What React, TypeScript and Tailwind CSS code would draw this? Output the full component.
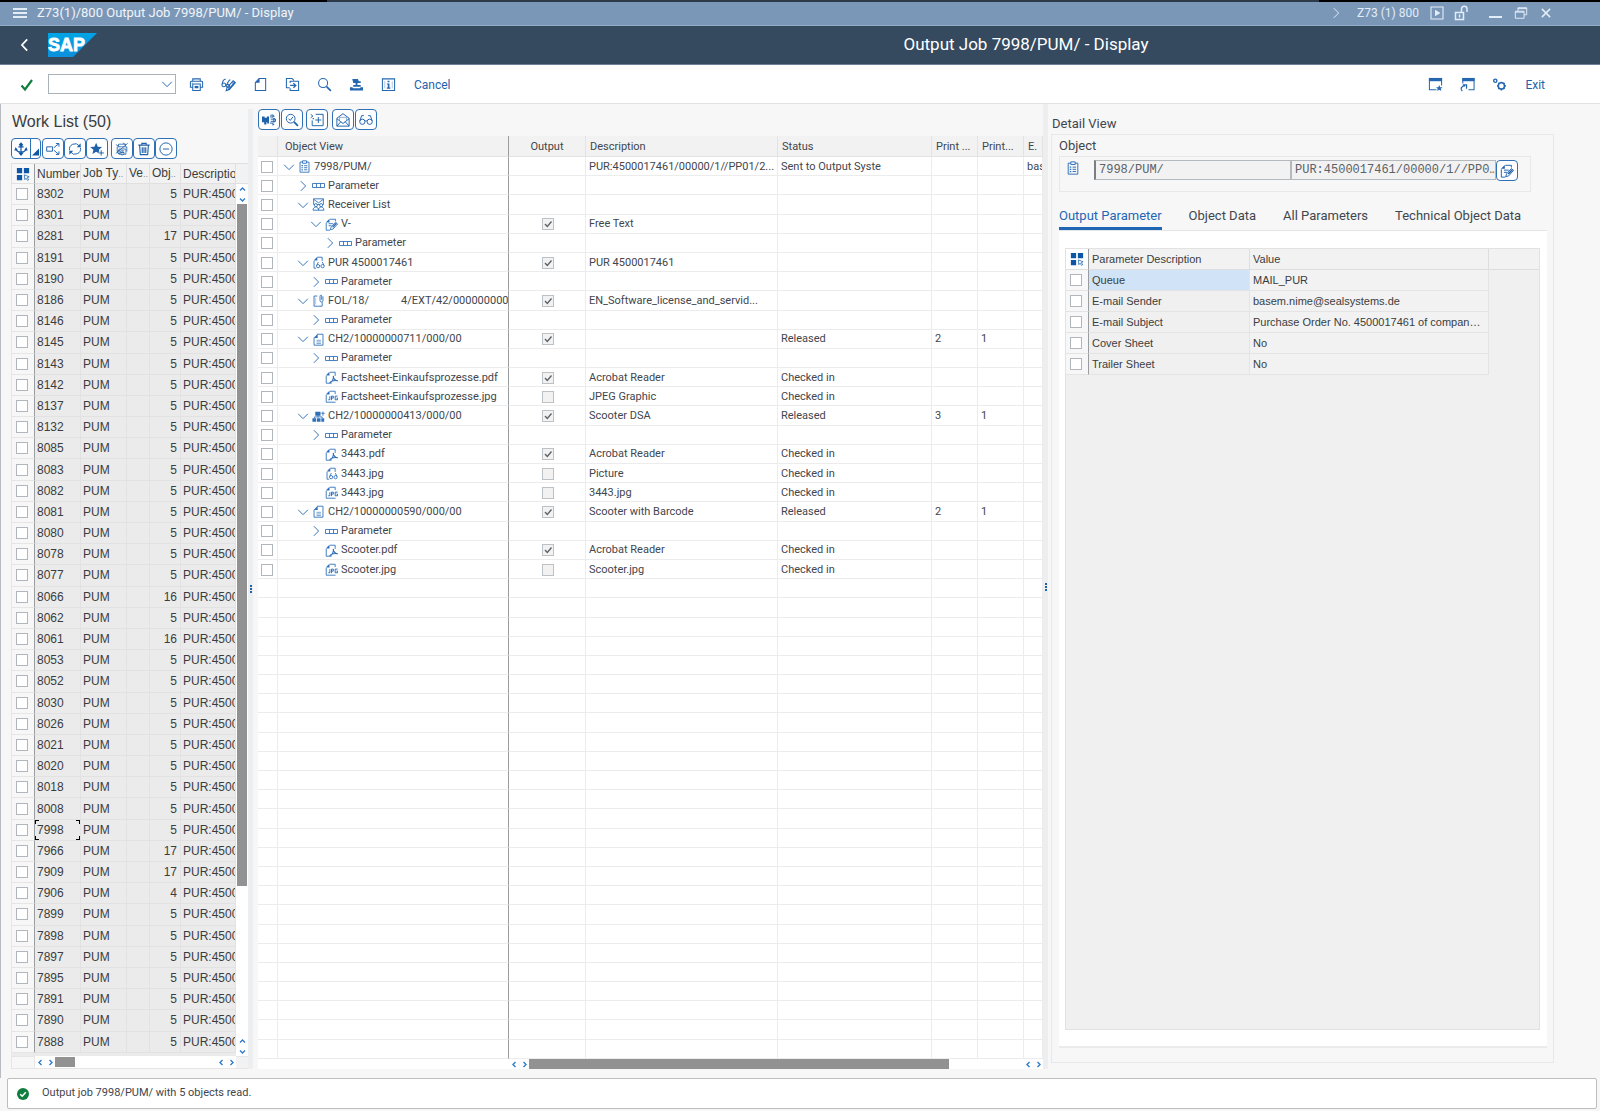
import type { ReactNode } from "react";

const ui = "font-[Roboto,'Liberation_Sans',sans-serif]";
const arial = "font-['Liberation_Sans',Arial,sans-serif]";

/* ---------- icons ---------- */

function Svg({ children, size = "size-4", stroke = 1.1 }: { children: ReactNode; size?: string; stroke?: number }) {
  return (
    <svg viewBox="0 0 16 16" className={`${size} shrink-0`} fill="none" stroke="currentColor" strokeWidth={stroke} aria-hidden="true">
      {children}
    </svg>
  );
}

const solid = { fill: "currentColor", stroke: "none" };

const ChevronRight = () => (
  <Svg size="size-3.5"><path d="M5.500 2.500L11 8l-5.500 5.500" /></Svg>
);
const ChevronDown = () => (
  <Svg size="size-3.5"><path d="M2.500 5.500L8 11l5.500-5.500" /></Svg>
);

const PrintIcon = () => (
  <Svg>
    <path d="M4 4.500V2h8v2.500M4 11H1.500V5.500a1 1 0 0 1 1-1h11a1 1 0 0 1 1 1V11H12M4 7.500h8V14.500H4z" />
    <path d="M6 9.500h4V12H6z" {...solid} />
    <path d="M3 6.500h.8" />
  </Svg>
);
const GlassesPencilIcon = () => (
  <Svg>
    <circle cx="3" cy="8.500" r="2" /><circle cx="7.500" cy="9.500" r="1.700" />
    <path d="M1.200 8C1.500 5 2.500 2.500 5 2.500M6.200 8.500C7 6 8 3.500 10 3" />
    <path d="M5.500 14.500l1-3.200L13 4l2.300 2L9 13.300zM7 14l8-8.500" />
    <path d="M12.800 4l2.500 2-2 2.500-2.500-2.200z" {...solid} fillOpacity=".55" />
  </Svg>
);
const PageIcon = () => (
  <Svg>
    <path d="M6.500 1.500h7v13h-11V6z" />
    <path d="M2 6l5-5v5z" {...solid} />
  </Svg>
);
const PageArrowIcon = () => (
  <Svg>
    <path d="M5 11.500H1.500v-10h6l2 2M9.500 4.500h5v10h-9v-2.500M5.500 6.500v-2h4" />
    <path d="M5.500 9h6M9 6.500L11.500 9 9 11.500" strokeWidth="1.400" />
  </Svg>
);
const SearchIcon = () => (
  <Svg>
    <circle cx="6.500" cy="6.500" r="4.800" />
    <path d="M10.200 10.200l4.600 4.600" strokeWidth="1.800" />
  </Svg>
);
const StampIcon = () => (
  <Svg>
    <path d="M3.500 2h6l1 2.500h2V6.500H9v2h3.500v2h-8v-2H7V6.500H4.500z" {...solid} />
    <path d="M1 11h2.500l1 1h7l1-1H15v3.500H1z" {...solid} />
  </Svg>
);
const InfoIcon = () => (
  <Svg>
    <path d="M1.500 2h13v12.500h-13z" />
    <path d="M7 4h2v1.700H7zM6.300 7H9v4.300h1V12.400H6.200v-1.100h1V8.100h-.9z" {...solid} />
    <path d="M4 4.500v7.500M12 4.500v7.500" strokeOpacity=".35" />
  </Svg>
);
const WindowStarIcon = () => (
  <Svg>
    <path d="M9 13.500H1.500v-12h13V9" />
    <path d="M1 1h14v3.500H1z" {...solid} />
    <path d="M12 8.500l1 2.300 2.500.2-1.900 1.600.6 2.400-2.200-1.300L9.800 15l.6-2.400L8.500 11l2.500-.2z" {...solid} />
  </Svg>
);
const WindowArrowIcon = () => (
  <Svg>
    <path d="M3 7V1.500h12v12H9" />
    <path d="M2.500 1H15.500v3.500h-13z" {...solid} />
    <path d="M2.500 15C0 12.500 1.500 9.500 5.500 9.500M3 8.500h4v4" strokeWidth="1.300" />
  </Svg>
);
const GearsIcon = () => (
  <Svg>
    <circle cx="3.500" cy="4" r="1.700" strokeWidth="1.500" />
    <circle cx="10" cy="9.500" r="3.300" strokeWidth="1.600" />
    <path d="M10 5v1.200M10 12.800V14.500M5.500 9.500H7M13.200 9.500h1.600M6.800 6.300l1 1M12.300 11.800l1 1M13.300 6.300l-1 1M6.800 12.700l1-1" strokeWidth="1.700" />
  </Svg>
);
const AnchorIcon = () => (
  <Svg>
    <path d="M8 3v10M2.500 8.500C3 11 5 11.500 8 11.500s5-.5 5.500-3M5 5.500h6" strokeWidth="1.300" />
    <path d="M8 .3l2.600 2.700L8 5.700 5.400 3zM8 16l-3.200-4h6.400zM2 5.800l2.500 4H.3zM14 5.800l1.700 4h-4.200z" {...solid} />
  </Svg>
);
const BranchIcon = () => (
  <Svg>
    <path d="M.8 5.500h6.700v5H.8zM9 6.500l5.500-4.500M9 9.500l5.500 4.500M11.300 1.800h3.500v3.500M11.300 14.200h3.500v-3.500" />
  </Svg>
);
const RefreshIcon = () => (
  <Svg>
    <path d="M1.800 9.500A6.300 6.300 0 0 1 13 4.500M14.200 6.500A6.300 6.300 0 0 1 3 11.500" />
    <path d="M14.500 1.500v4.500H10zM1.500 14.500V10H6z" {...solid} />
  </Svg>
);
const StarPlusIcon = () => (
  <Svg>
    <path d="M7 .8l1.900 4.500 4.900.4-3.700 3.200 1.100 4.700L7 11.200 2.800 13.700l1.100-4.800L.2 5.700l4.900-.4z" {...solid} />
    <path d="M12.800 9.500v6M9.800 12.500h6" stroke="#fff" strokeWidth="3" />
    <path d="M12.800 9.500v6M9.800 12.500h6" />
  </Svg>
);
const PrintOffIcon = () => (
  <Svg stroke={0.9}>
    <path d="M4 5V2.500h8V5M2.500 11V5.500h11V11M4.500 8h8v6h-8zM1 13L14.500 1.500M1 3l4 2M9 1l3 2M6.500 10h4M6.500 12h4" />
    <circle cx="4.500" cy="11.500" r="1.800" /><circle cx="8.500" cy="13" r="1.800" />
  </Svg>
);
const TrashIcon = () => (
  <Svg>
    <path d="M1.500 3.500h13M5.500 3.500v-2h5v2M3 4l.8 10.500h8.400L13 4M6 6v6.500M8 6v6.500M10 6v6.500" strokeWidth="1.300" />
  </Svg>
);
const MinusCircleIcon = () => (
  <Svg>
    <circle cx="8" cy="8" r="7" />
    <path d="M4.500 8h7" />
  </Svg>
);
const TransportIcon = () => (
  <Svg>
    <path d="M0 4h3v1.500h2.500V4H8v8H6V10.500H5V13H2.500v-2.500H0z" {...solid} />
    <path d="M9 4.500h3.500V2L14 3.500 12.500 5M9 11.500h3.500V14l1.500-1.500M10 7h5.500M10 9.500h5.500M13.500 5.500v5.500M14 6l1.800 2L14 10.500M9.500 2.500H12" />
  </Svg>
);
const SearchCheckIcon = () => (
  <Svg>
    <circle cx="6.500" cy="6.500" r="5" />
    <path d="M4 6.500L6 8.500l3-4" />
    <path d="M10.200 10.200l4.600 4.600" strokeWidth="2" />
  </Svg>
);
const InsertIcon = () => (
  <Svg>
    <path d="M6.500 1.500h8.500v13H2.500V8.500M9.500 4.500v7M6 8h7M.8 1.500l2.500 2-2.500 2" />
    <path d="M3 6.500h1.500" strokeWidth="1.300" />
  </Svg>
);
const MailIcon = () => (
  <Svg>
    <path d="M1 6L8 .8 15 6v9H1zM1 6.500l4.500 3.500L8 12l2.500-2L15 6.500M1 15l4.500-5M15 15l-4.500-5" />
    <path d="M4 8.500V5h8v3.500" strokeOpacity=".5" />
  </Svg>
);
const GlassesIcon = () => (
  <Svg>
    <circle cx="3.800" cy="10" r="3" /><circle cx="12.200" cy="10" r="3" />
    <path d="M6.800 9.500c.5-.8 1.900-.8 2.400 0M1 9L3 3h2.500M15 9l-2-6h-2.500" />
  </Svg>
);
const ClipboardIcon = () => (
  <Svg>
    <path d="M5.500 2.500h-3v12.500h11V2.500h-3M5.500 1h5v3h-5zM7.500 7h4M7.500 9.500h4M7.500 12h4" />
    <path d="M4.300 6.300h1.700v1.500H4.300zM4.300 8.800h1.700v1.500H4.300zM4.300 11.300h1.700v1.500H4.300z" {...solid} />
  </Svg>
);
const ParameterIcon = () => (
  <Svg>
    <path d="M.6 5.500h14.800v5H.6zM5.500 5.500v5M10.500 5.500v5" />
  </Svg>
);
const ReceiverIcon = () => (
  <Svg>
    <path d="M2 1h12v7H2zM2 1.500L8 6l6-4.500" />
    <circle cx="4.800" cy="8.800" r="1.900" fill="#fff" /><circle cx="11.200" cy="8.800" r="1.900" fill="#fff" />
    <path d="M1.300 15c0-5.200 6.700-5.200 6.700 0c0-5.200 6.700-5.200 6.700 0z" fill="#fff" />
  </Svg>
);
const EditDocIcon = () => (
  <Svg>
    <path d="M6 1.500h7V4M1.500 6v9h4.500M4.500 7h5.500M4.500 9.500h3.500" />
    <path d="M1 5.500L5.500 1v4.500z" {...solid} />
    <path d="M6.500 14.500l1-3.200L13 5.200l2.500 2.100L10 13.500z" />
    <path d="M9.500 11.500l4.500-5" strokeWidth="1.800" />
  </Svg>
);
const ViewDocIcon = () => (
  <Svg>
    <path d="M6.500 1.500h6V6M2.500 6v9H5" />
    <path d="M2 5.500L6.500 1v4.500z" {...solid} />
    <circle cx="7.500" cy="12.500" r="2" /><circle cx="13" cy="12.500" r="2" />
    <path d="M5.800 11.500l2-4M14.700 11.500l-2-4" />
  </Svg>
);
const FolderClipIcon = () => (
  <Svg>
    <path d="M6.500 2.500h-4v12.500h10V10" />
    <path d="M13.500 3v5a1.800 1.800 0 0 1-3.600 0V2.500a1 1 0 0 1 2 0V7" />
    <path d="M4.500 4.500v8.500" strokeOpacity=".4" />
  </Svg>
);
const DocIcon = () => (
  <Svg>
    <path d="M6.500 1.500h7v13.500h-11V6" />
    <path d="M5.500 9h5.500M5.500 11h5.500M5.500 13h5.500" strokeOpacity=".7" />
    <path d="M2 6l5-5v5z" {...solid} />
  </Svg>
);
const StructureIcon = () => (
  <Svg>
    <path d="M4 2h6.500v5H4zM.5 10h4.500v4.500H.500zM6 10h4.500v4.500H6zM11.500 10h3.500v4.500h-3.500z" {...solid} />
    <path d="M7.500 6v3M3 10V8.500h9.500V10M13.500 2v5M11.500 4h4" />
  </Svg>
);
const PdfIcon = () => (
  <Svg>
    <path d="M6 1.500h6.500V6M1.500 6v9H8" />
    <path d="M1 5.500L5.500 1v4.500z" {...solid} />
    <path d="M10 6c.5 3 2.500 6 6 6M5.500 14.500c3-1 5-4.500 5-8.500M6 14c2-1.800 5.500-3 9.500-2" strokeWidth="1.300" />
  </Svg>
);
const JpgIcon = () => (
  <Svg>
    <path d="M6 1.500h6.500V5M1.500 6v9H13" />
    <path d="M1 5.500L5.500 1v4.500z" {...solid} />
    <path d="M6 7.500v4.500H4M8 12.500v-5h2.200v2.500H8M15.500 7.500h-3v4.500h3V9.900h-1.300" strokeWidth="1.200" />
  </Svg>
);

function SapLogo() {
  return (
    <svg viewBox="0 0 49 24" className="h-6 w-[49px]" role="img" aria-label="SAP">
      <defs>
        <linearGradient id="sap" x1="0" y1="0" x2="0" y2="1">
          <stop offset="0" stopColor="#00a5e6" />
          <stop offset="1" stopColor="#0c8fdc" />
        </linearGradient>
      </defs>
      <path d="M0 0h49L25 24H0z" fill="url(#sap)" />
      <text x="0" y="18" fontFamily="'Liberation Sans'" fontWeight="700" fontSize="18" fill="#fff" stroke="#fff" strokeWidth=".8">SAP</text>
    </svg>
  );
}

/* ---------- small controls ---------- */

function IconButton({ label, children }: { label: string; children: ReactNode }) {
  return (
    <button type="button" aria-label={label} className="grid size-4 place-items-center text-[#2467b0] [&>svg]:size-[15px]">
      {children}
    </button>
  );
}

function BoxButton({ label, children }: { label: string; children: ReactNode }) {
  return (
    <button type="button" aria-label={label} className="grid h-[21px] w-[22px] place-items-center rounded-[4px] border border-[#2f71b5] bg-white text-[#1f62ac] [&>svg]:size-[14px]">
      {children}
    </button>
  );
}

function Check({ label, checked = false, muted = false }: { label: string; checked?: boolean; muted?: boolean }) {
  return (
    <span className="relative block size-3">
      <input
        type="checkbox"
        aria-label={label}
        defaultChecked={checked}
        className={`block size-3 appearance-none border ${muted ? "border-[#bcc1c6] bg-[#f2f2f2]" : "border-[#b0b6bc] bg-white"}`}
      />
      {checked && (
        <svg viewBox="0 0 12 12" className="pointer-events-none absolute inset-0 size-3" fill="none" stroke="#5a5f64" strokeWidth="1.300" aria-hidden="true">
          <path d="M3 6l2.300 2.500L9.500 3.500" />
        </svg>
      )}
    </span>
  );
}

function Arrow({ dir }: { dir: "left" | "right" | "up" | "down" }) {
  const d = { left: "M5.500 2L3 4.500 5.500 7", right: "M3.500 2L6 4.500 3.500 7", up: "M2 5.500L4.500 3 7 5.500", down: "M2 3.500L4.500 6 7 3.500" }[dir];
  return (
    <button type="button" aria-label={`Scroll ${dir}`} className="grid size-[10px] place-items-center text-[#2f7ccc]">
      <svg viewBox="0 0 9 9" className="size-[9px]" fill="none" stroke="currentColor" strokeWidth="1.400"><path d={d} /></svg>
    </button>
  );
}

function SelectAll() {
  return (
    <svg viewBox="0 0 16 16" className="size-[14px] text-[#0d56a6]" fill="currentColor" aria-hidden="true">
      <path d="M1 1h6v6H1zM9 1h6v6H9zM1 9h6v6H1z" />
      <path d="M9.500 9l5.500 2.200-2.200.8 1.700 2.500-1.300.8-1.700-2.500-1.400 1.700z" fill="#fff" stroke="currentColor" strokeWidth=".8" />
    </svg>
  );
}

function Splitter({ extra }: { extra: string }) {
  return (
    <div role="separator" aria-orientation="vertical" className={`flex w-[5px] shrink-0 flex-col items-center justify-center gap-px bg-[#edeeef] ${extra}`}>
      <i className="size-[2px] bg-[#1f62ac]" />
      <i className="size-[2px] bg-[#1f62ac]" />
      <i className="size-[2px] bg-[#1f62ac]" />
    </div>
  );
}

function Dots() {
  return <span className="text-[9px] text-[#8a8d90]">..</span>;
}

/* ---------- data ---------- */

const jobs: [number, number][] = [
  [8302, 5], [8301, 5], [8281, 17], [8191, 5], [8190, 5], [8186, 5], [8146, 5], [8145, 5], [8143, 5], [8142, 5],
  [8137, 5], [8132, 5], [8085, 5], [8083, 5], [8082, 5], [8081, 5], [8080, 5], [8078, 5], [8077, 5], [8066, 16],
  [8062, 5], [8061, 16], [8053, 5], [8052, 5], [8030, 5], [8026, 5], [8021, 5], [8020, 5], [8018, 5], [8008, 5],
  [7998, 5], [7966, 17], [7909, 17], [7906, 4], [7899, 5], [7898, 5], [7897, 5], [7895, 5], [7891, 5], [7890, 5],
  [7888, 5],
];

type Node = {
  level: number;
  open?: boolean;
  icon: ReactNode;
  name: ReactNode;
  output?: boolean;
  desc?: string;
  status?: string;
  p1?: string;
  p2?: string;
  e?: string;
};

const param = (level: number): Node => ({ level, open: false, icon: <ParameterIcon />, name: "Parameter" });

const tree: Node[] = [
  { level: 0, open: true, icon: <ClipboardIcon />, name: "7998/PUM/", desc: "PUR:4500017461/00000/1//PP01/2...", status: "Sent to Output Syste", e: "bas" },
  param(1),
  { level: 1, open: true, icon: <ReceiverIcon />, name: "Receiver List" },
  { level: 2, open: true, icon: <EditDocIcon />, name: "V-", output: true, desc: "Free Text" },
  param(3),
  { level: 1, open: true, icon: <ViewDocIcon />, name: "PUR 4500017461", output: true, desc: "PUR 4500017461" },
  param(2),
  { level: 1, open: true, icon: <FolderClipIcon />, name: <>FOL/18/<span className="ml-8">4/EXT/42/0000000000</span></>, output: true, desc: "EN_Software_license_and_servid..." },
  param(2),
  { level: 1, open: true, icon: <DocIcon />, name: "CH2/10000000711/000/00", output: true, status: "Released", p1: "2", p2: "1" },
  param(2),
  { level: 2, icon: <PdfIcon />, name: "Factsheet-Einkaufsprozesse.pdf", output: true, desc: "Acrobat Reader", status: "Checked in" },
  { level: 2, icon: <JpgIcon />, name: "Factsheet-Einkaufsprozesse.jpg", output: false, desc: "JPEG Graphic", status: "Checked in" },
  { level: 1, open: true, icon: <StructureIcon />, name: "CH2/10000000413/000/00", output: true, desc: "Scooter DSA", status: "Released", p1: "3", p2: "1" },
  param(2),
  { level: 2, icon: <PdfIcon />, name: "3443.pdf", output: true, desc: "Acrobat Reader", status: "Checked in" },
  { level: 2, icon: <ViewDocIcon />, name: "3443.jpg", output: false, desc: "Picture", status: "Checked in" },
  { level: 2, icon: <JpgIcon />, name: "3443.jpg", output: false, desc: "3443.jpg", status: "Checked in" },
  { level: 1, open: true, icon: <DocIcon />, name: "CH2/10000000590/000/00", output: true, desc: "Scooter with Barcode", status: "Released", p1: "2", p2: "1" },
  param(2),
  { level: 2, icon: <PdfIcon />, name: "Scooter.pdf", output: true, desc: "Acrobat Reader", status: "Checked in" },
  { level: 2, icon: <JpgIcon />, name: "Scooter.jpg", output: false, desc: "Scooter.jpg", status: "Checked in" },
];

const emptyRows = Array.from({ length: 25 }, (_, i) => i);
const indents = ["pl-1", "pl-[18px]", "pl-[31px]", "pl-[45px]"];

const details = [
  ["Queue", "MAIL_PUR"],
  ["E-mail Sender", "basem.nime@sealsystems.de"],
  ["E-mail Subject", "Purchase Order No. 4500017461 of compan…"],
  ["Cover Sheet", "No"],
  ["Trailer Sheet", "No"],
];

/* ---------- sections ---------- */

function TitleBar() {
  return (
    <header>
      <div className="flex h-[2px] bg-black">
        <div className="ml-[327px] w-[62%] bg-[#2c3a49]" />
      </div>
      <div className="flex h-6 items-center border-b border-[#93abc5] bg-[#7a97b8] pb-px pl-[13px] pr-12 text-[13px] text-[#e3edf8]">
        <button type="button" aria-label="Menu" className="mr-2.5">
          <svg viewBox="0 0 14 12" className="h-3 w-3.5" stroke="currentColor" strokeWidth="2" aria-hidden="true"><path d="M0 2h14M0 6h14M0 10h14" /></svg>
        </button>
        <span className="flex-1 text-white/90">Z73(1)/800 Output Job 7998/PUM/ - Display</span>
        <ChevronRight />
        <span className="ml-3.5 mr-2.5 text-[12px]">Z73 (1) 800</span>
        <Svg><path d="M2 2h12v12H2z" /><path d="M6 4.800l5.500 3.200L6 11.200z" {...solid} /></Svg>
        <span className="ml-2 mr-5">
          <Svg><path d="M2.500 7.500h8v7h-8zM8.500 7V4a2.500 2.500 0 0 1 5.500 0v3" strokeWidth="1.500" /><path d="M5.800 9.500h1.500v3H5.800z" {...solid} /></Svg>
        </span>
        <button type="button" aria-label="Minimize" className="mr-3"><svg viewBox="0 0 13 16" className="h-4 w-[13px]" stroke="currentColor" strokeWidth="2"><path d="M0 12h13" /></svg></button>
        <button type="button" aria-label="Restore" className="mr-3"><Svg size="size-3.5"><path d="M1.500 6h10v8h-10zM4.500 6V2h10v8h-3M1.500 7h10M4.500 3h10" /></Svg></button>
        <button type="button" aria-label="Close"><Svg size="size-3" stroke={2}><path d="M2.500 2.500l11 11M13.500 2.500l-11 11" /></Svg></button>
      </div>
    </header>
  );
}

function ShellBar() {
  return (
    <div className="flex h-[39px] items-center border-b border-[#6d8299] bg-[#354a5f] pl-[18px] text-white">
      <button type="button" aria-label="Back" className="mr-4">
        <Svg size="size-3.5" stroke={2}><path d="M10.500 1.500L4.500 8l6 6.500" /></Svg>
      </button>
      <SapLogo />
      <h1 className="flex-1 pl-[355px] text-center text-[17px]">Output Job 7998/PUM/ - Display</h1>
    </div>
  );
}

function Toolbar() {
  return (
    <div className="flex h-[39px] items-center border-b border-[#dfe1e3] bg-white pl-[19px] pr-[55px] text-[12px] text-[#1f62ac]">
      <button type="button" aria-label="Enter" className="pt-px text-[#107e3e]">
        <Svg stroke={2.2}><path d="M2.500 8.500L6 12.500 13 3" /></Svg>
      </button>
      <div className="relative ml-[13px] mr-3">
        <select aria-label="Command" className="block h-5 w-32 appearance-none border border-[#a9b1b9] bg-white"><option value=""></option></select>
        <span className="pointer-events-none absolute right-0.5 top-[3px]"><ChevronDown /></span>
      </div>
      <div className="flex gap-4 pt-0.5">
        <IconButton label="Print"><PrintIcon /></IconButton>
        <IconButton label="Display or change"><GlassesPencilIcon /></IconButton>
        <IconButton label="Create"><PageIcon /></IconButton>
        <IconButton label="Copy"><PageArrowIcon /></IconButton>
        <IconButton label="Find"><SearchIcon /></IconButton>
        <IconButton label="Output"><StampIcon /></IconButton>
        <IconButton label="Information"><InfoIcon /></IconButton>
        <button type="button" className="ml-0.5">Cancel</button>
      </div>
      <div className="ml-auto flex gap-4 pt-0.5">
        <IconButton label="New window"><WindowStarIcon /></IconButton>
        <IconButton label="Shortcut"><WindowArrowIcon /></IconButton>
        <IconButton label="Settings"><GearsIcon /></IconButton>
        <button type="button" className="ml-0.5">Exit</button>
      </div>
    </div>
  );
}

function WorkList() {
  const th = "h-5 whitespace-nowrap border-b border-r border-[#e0e0e0] bg-[#f2f2f2] py-0 pl-[2px] pr-0 text-left font-normal";
  const td = "overflow-hidden whitespace-nowrap border-b border-r border-[#e2e2e2] bg-[#ebebeb] py-0 pl-[2px] pr-[3px]";
  return (
    <section className={`${arial} flex w-[247px] shrink-0 flex-col pl-2.5 text-[#3a3d40]`}>
      <h2 className="pt-2 pl-px text-[16px] leading-5">Work List (50)</h2>
      <div className="mt-1.5 flex">
        <button type="button" aria-label="Choose" className="flex h-[21px] w-[30px] items-center rounded-[4px] border border-[#2f71b5] bg-white text-[#0d56a6]">
          <span className="grid w-[18px] place-items-center [&>svg]:size-3.5"><AnchorIcon /></span>
          <svg viewBox="0 0 9 18" className="h-[19px] w-[10px] border-l border-[#2f71b5]" fill="currentColor"><path d="M8 9v7H1z" /></svg>
        </button>
        <div className="ml-px flex">
          <BoxButton label="Navigate"><BranchIcon /></BoxButton>
          <BoxButton label="Refresh"><RefreshIcon /></BoxButton>
          <BoxButton label="Add favorite"><StarPlusIcon /></BoxButton>
        </div>
        <div className="ml-[3px] flex">
          <BoxButton label="Cancel print"><PrintOffIcon /></BoxButton>
          <BoxButton label="Delete"><TrashIcon /></BoxButton>
          <BoxButton label="Exclude"><MinusCircleIcon /></BoxButton>
        </div>
      </div>
      <div className="mt-1 flex min-h-0 flex-1 border-t border-[#e0e0e0] text-[12px] leading-4">
        <div className="min-w-0 flex-1 bg-[#ebebeb] pb-[3px]">
          <table className="h-full w-full table-fixed border-separate border-spacing-0">
            <colgroup>
              <col className="w-6" /><col className="w-[46px]" /><col className="w-[46px]" /><col className="w-[23px]" /><col className="w-[31px]" /><col />
            </colgroup>
            <thead>
              <tr>
                <th className="h-5 border-b border-l border-r border-[#e0e0e0] border-r-[#9a9da0] bg-[#f7f7f7] p-0"><span className="grid place-items-center"><SelectAll /></span></th>
                <th className={th}>Number</th>
                <th className={th}>Job Ty<Dots /></th>
                <th className={th}>Ve<Dots /></th>
                <th className={th}>Obj<Dots /></th>
                <th className={`${th} overflow-hidden`}>Descriptio</th>
              </tr>
            </thead>
            <tbody>
              {jobs.map(([id, count]) => (
                <tr key={id}>
                  <td className="border-b border-l border-r border-[#e6e6e6] border-r-[#9a9da0] bg-[#f7f7f7] py-0 pl-1"><Check label={`Select job ${id}`} /></td>
                  <td className={`${td} relative`}>
                    {id}
                    {id === 7998 && (
                      <>
                        <i className="absolute left-0 top-0 size-1 border-l border-t border-black" />
                        <i className="absolute right-0 top-0 size-1 border-r border-t border-black" />
                        <i className="absolute bottom-0 left-0 size-1 border-b border-l border-black" />
                        <i className="absolute bottom-0 right-0 size-1 border-b border-r border-black" />
                      </>
                    )}
                  </td>
                  <td className={td}>PUM</td>
                  <td className={td} />
                  <td className={`${td} text-right`}>{count}</td>
                  <td className={td}>PUR:4500</td>
                </tr>
              ))}
            </tbody>
          </table>
        </div>
        <div className="flex w-3 flex-col items-center bg-white">
          <div className="h-5 w-full border-b border-[#e0e0e0] bg-[#f2f2f2]" />
          <Arrow dir="up" />
          <Arrow dir="down" />
          <div className="w-[10px] flex-[82] bg-[#929292]" />
          <div className="flex-[18]" />
          <Arrow dir="up" />
          <Arrow dir="down" />
        </div>
      </div>
      <div className="flex h-[13px] border-b border-[#e6e6e6]">
        <div className="w-6 border-x border-t border-[#e6e6e6]" />
        <div className="flex flex-1 items-center bg-white">
          <Arrow dir="left" />
          <Arrow dir="right" />
          <div className="h-[10px] w-5 bg-[#929292]" />
          <div className="flex-1" />
          <Arrow dir="left" />
          <Arrow dir="right" />
        </div>
        <div className="w-3 border-t border-[#e6e6e6] bg-[#f2f2f2]" />
      </div>
    </section>
  );
}

function ObjectView() {
  const line = "border-b border-r border-[#ececec] pb-0 pt-px";
  const head = "h-[21px] truncate border-b border-r border-[#e3e3e3] bg-[#f2f2f2] pb-0 pt-px font-normal";
  const th = `${head} pl-1 text-left`;
  return (
    <section className="ml-[5px] flex min-w-0 flex-[785] flex-col text-[#3f464d]">
      <div className="flex pt-[5px]">
        <div className="flex gap-px">
          <BoxButton label="Transport"><TransportIcon /></BoxButton>
          <BoxButton label="Check"><SearchCheckIcon /></BoxButton>
        </div>
        <div className="ml-[3px]"><BoxButton label="Insert"><InsertIcon /></BoxButton></div>
        <div className="ml-1 flex gap-px">
          <BoxButton label="Mail"><MailIcon /></BoxButton>
          <BoxButton label="Display"><GlassesIcon /></BoxButton>
        </div>
      </div>
      <div className="mt-1.5 min-h-0 flex-1 overflow-hidden bg-white">
        <table className="h-full w-full table-fixed border-separate border-spacing-0 text-[11px] leading-4">
          <colgroup>
            <col className="w-5" /><col className="w-[231px]" /><col className="w-[77px]" /><col className="w-[192px]" />
            <col className="w-[154px]" /><col className="w-[46px]" /><col className="w-[46px]" /><col />
          </colgroup>
          <thead>
            <tr>
              <th className={th} />
              <th className={`${head} border-r-[#9a9da0] pl-[7px] text-left`}>Object View</th>
              <th className={`${head} text-center`}>Output</th>
              <th className={th}>Description</th>
              <th className={th}>Status</th>
              <th className={th}>Print ...</th>
              <th className={th}>Print...</th>
              <th className={th}>E.</th>
            </tr>
          </thead>
          <tbody>
            {tree.map((n, i) => (
              <tr key={i}>
                <td className={`${line} pl-[3px]`}><Check label={`Select row ${i + 1}`} /></td>
                <td className={`${line} ${indents[n.level]} overflow-hidden whitespace-nowrap border-r-[#9a9da0]`}>
                  <span className="flex items-center text-[#2f70b8]">
                    <span className="w-4 shrink-0">{n.open === undefined ? null : n.open ? <ChevronDown /> : <ChevronRight />}</span>
                    <span className="mr-[3px] shrink-0 [&>svg]:size-[13px]">{n.icon}</span>
                    <span className="text-[#3f464d]">{n.name}</span>
                  </span>
                </td>
                <td className={line}>
                  {n.output !== undefined && <span className="flex justify-center pl-px"><Check muted label={`Output row ${i + 1}`} checked={n.output} /></span>}
                </td>
                <td className={`${line} overflow-hidden whitespace-nowrap pl-[3px]`}>{n.desc}</td>
                <td className={`${line} whitespace-nowrap pl-[3px]`}>{n.status}</td>
                <td className={`${line} pl-[3px]`}>{n.p1}</td>
                <td className={`${line} pl-[3px]`}>{n.p2}</td>
                <td className={`${line} overflow-hidden pl-[3px]`}>{n.e}</td>
              </tr>
            ))}
            {emptyRows.map((i) => (
              <tr key={i}>
                <td className={line}>&nbsp;</td>
                <td className={`${line} border-r-[#9a9da0]`} />
                <td className={line} /><td className={line} /><td className={line} />
                <td className={line} /><td className={line} /><td className={line} />
              </tr>
            ))}
          </tbody>
        </table>
      </div>
      <div className="flex h-[10px] bg-white pl-[251px]">
        <Arrow dir="left" />
        <Arrow dir="right" />
        <div className="flex flex-1">
          <div className="w-[85%] bg-[#929292]" />
        </div>
        <Arrow dir="left" />
        <Arrow dir="right" />
      </div>
    </section>
  );
}

function DetailView() {
  const tab = "h-[25px] border-b-[3px] border-transparent leading-5";
  const th = "h-[21px] border-b border-r border-[#dedede] bg-[#f2f2f2] px-[3px] py-0 text-left font-normal";
  const td = "h-[21px] truncate border-b border-r border-[#e4e4e4] px-[3px] py-0";
  const field = "h-5 border border-[#b4b9be] bg-[#f2f2f2] pl-[3px] font-['Liberation_Mono',monospace] text-[12px] text-[#5c6166]";
  return (
    <div className="flex min-w-0 flex-[552]">
      <section className="flex min-w-0 flex-1 flex-col pl-[3px] pr-[46px] text-[13px] text-[#3f464d]">
        <h2 className="pt-2.5 pl-px leading-5">Detail View</h2>
        <div className="mb-1.5 flex min-h-0 flex-1 flex-col border border-[#e6e8ea] pb-[14px] pl-[7px] pr-1.5 pt-px">
          <h3 className="leading-5">Object</h3>
          <div className="mr-4 flex h-9 border border-[#e6e8ea] pt-[3px]">
            <span className="ml-1.5 mr-3.5 mt-px text-[#2f70b8] [&>svg]:size-3.5"><ClipboardIcon /></span>
            <input aria-label="Object" readOnly defaultValue="7998/PUM/" className={`${field} w-[197px] border-l-2 border-l-[#7a7f84]`} />
            <input aria-label="Object description" readOnly defaultValue="PUR:4500017461/00000/1//PP0…" className={`${field} w-[205px] pr-0`} />
            <BoxButton label="Edit"><EditDocIcon /></BoxButton>
          </div>
          <div role="tablist" className="mt-[13px] flex gap-[27px] border-b border-[#e3e5e7]">
            <button role="tab" aria-selected="true" type="button" className="h-[25px] border-b-[3px] border-[#1f66b5] leading-5 text-[#1f66b5]">Output Parameter</button>
            <button role="tab" aria-selected="false" type="button" className={tab}>Object Data</button>
            <button role="tab" aria-selected="false" type="button" className={tab}>All Parameters</button>
            <button role="tab" aria-selected="false" type="button" className={tab}>Technical Object Data</button>
          </div>
          <div className="flex flex-1 flex-col border-b-2 border-[#ebebeb] bg-white pb-4 pl-1.5 pr-[7px] pt-[17px]">
            <div className={`${arial} flex-1 border border-[#e2e2e2] bg-[#f0f0f0] text-[11px] leading-4 text-[#3a3d40]`}>
              <table className="w-full table-fixed border-separate border-spacing-0">
                <colgroup><col className="w-[23px]" /><col className="w-[161px]" /><col className="w-[239px]" /><col /></colgroup>
                <thead>
                  <tr>
                    <th className="border-b border-r border-[#dedede] border-r-[#9a9da0] bg-white p-0"><span className="grid place-items-center"><SelectAll /></span></th>
                    <th className={th}>Parameter Description</th>
                    <th className={th}>Value</th>
                    <th className="border-b border-[#dedede] bg-[#f2f2f2]" />
                  </tr>
                </thead>
                <tbody>
                  {details.map(([k, v]) => (
                    <tr key={k}>
                      <td className="border-b border-r border-[#e4e4e4] border-r-[#9a9da0] bg-[#f7f7f7] py-0 pl-1"><Check label={`Select ${k}`} /></td>
                      <td className={`${td} ${k === "Queue" ? "bg-[#d1e4f7]" : ""}`}>{k}</td>
                      <td className={`${td} bg-[#f2f2f2]`}>{v}</td>
                      <td />
                    </tr>
                  ))}
                </tbody>
              </table>
            </div>
          </div>
        </div>
      </section>
    </div>
  );
}

export default function App() {
  return (
    <div className={`${ui} flex h-screen flex-col bg-[#f7f7f7]`}>
      <TitleBar />
      <ShellBar />
      <Toolbar />
      <main className="flex min-h-0 flex-1 border-l border-[#b8bcc0] pb-[9px]">
        <WorkList />
        <Splitter extra="mt-[5px]" />
        <ObjectView />
        <Splitter extra="" />
        <DetailView />
      </main>
      <footer className="mb-[2px] ml-[7px] mr-[3px] flex h-[31px] shrink-0 items-center rounded-[2px] border border-[#bdbdbd] bg-white pl-[9px] text-[11px] text-[#3f464d]">
        <svg viewBox="0 0 12 12" className="mr-[13px] size-3" aria-hidden="true">
          <circle cx="6" cy="6" r="6" fill="#107e3e" />
          <path d="M3.200 6.200l2 2 3.600-4" fill="none" stroke="#fff" strokeWidth="1.600" />
        </svg>
        <p role="status">Output job 7998/PUM/ with 5 objects read.</p>
      </footer>
    </div>
  );
}
